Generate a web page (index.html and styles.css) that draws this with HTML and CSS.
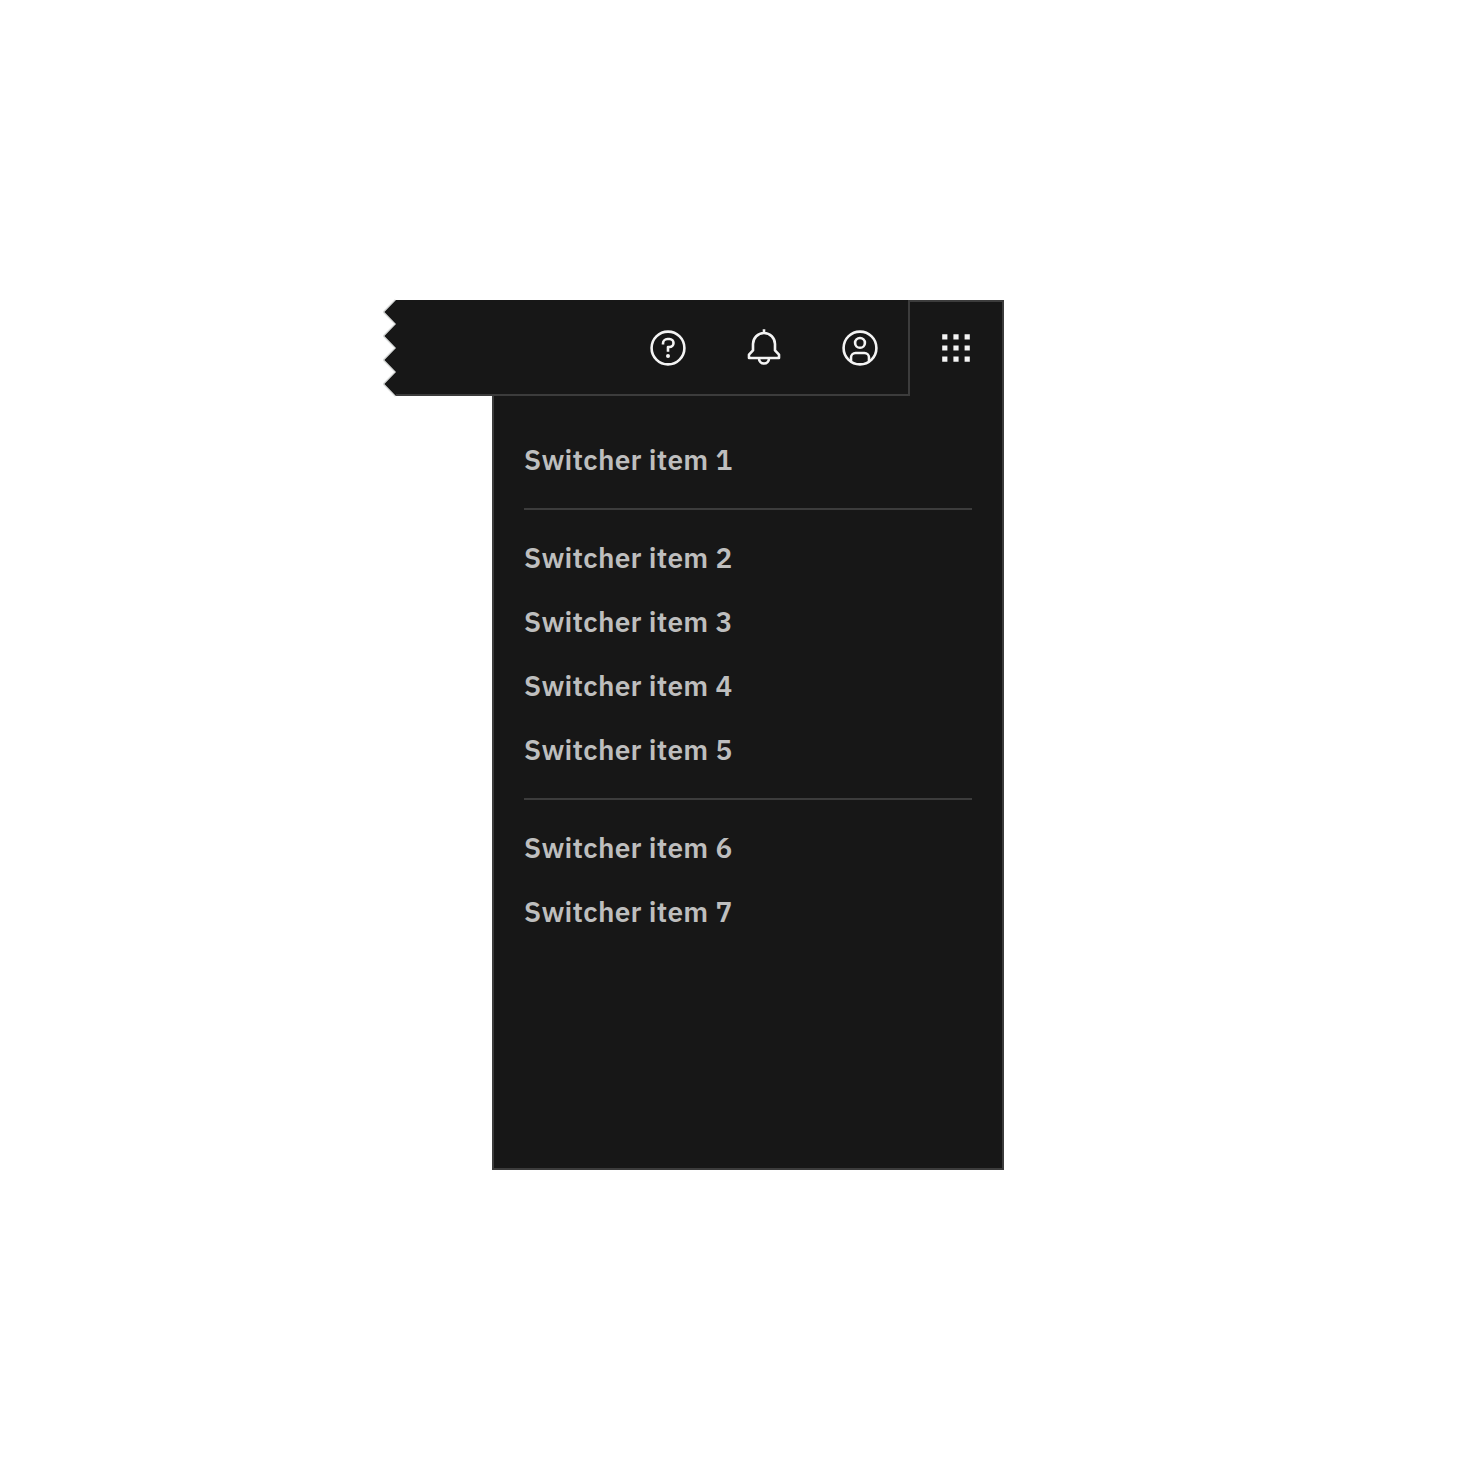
FILE: index.html
```html
<!DOCTYPE html>
<html lang="en">
<head>
<meta charset="utf-8">
<title>Switcher</title>
<link rel="stylesheet" href="styles.css">
</head>
<body>
<div class="shell">
  <header class="header">
    <svg class="torn-edge" width="12" height="96" viewBox="0 0 12 96" aria-hidden="true">
      <path class="torn-line" d="M11.6 0-.2 12 11.6 24-.2 36 11.6 48-.2 60 11.6 72-.2 84 11.6 96"/>
      <path class="torn-fill" d="M12 0 .4 12 12 24 .4 36 12 48 .4 60 12 72 .4 84 12 96Z"/>
    </svg>
    <div class="actions">
      <button class="action" aria-label="Help">
        <svg class="icon" viewBox="0 0 40 40"><circle cx="20" cy="20" r="16.4"/><path d="M15 16.4v-.9a4.5 4.5 0 0 1 4.5-4.5h2a4 4 0 0 1 0 8H20v4.7"/><circle class="solid" cx="20" cy="27.9" r="2"/></svg>
      </button>
      <button class="action" aria-label="Notifications">
        <svg class="icon" viewBox="0 0 40 40"><path d="M20 1.2V5M5 30v-3.4l4-4.2V16a11 11 0 0 1 22 0v6.4l4 4.2V30ZM15 30.5a5 5 0 0 0 10 0"/></svg>
      </button>
      <button class="action" aria-label="Account">
        <svg class="icon" viewBox="0 0 40 40"><circle cx="20" cy="20" r="16.4"/><circle cx="20" cy="14.9" r="4.9"/><path d="M11 33.4V29.6a4.6 4.6 0 0 1 4.6-4.6h8.8a4.6 4.6 0 0 1 4.6 4.6v3.8"/></svg>
      </button>
    </div>
    <button class="action switcher-toggle" aria-label="Switcher">
      <svg class="icon dots" viewBox="0 0 40 40"><path d="M6.2 6.2h5.2v5.2H6.2zM17.4 6.2h5.2v5.2h-5.2zM28.6 6.2h5.2v5.2h-5.2zM6.2 17.4h5.2v5.2H6.2zM17.4 17.4h5.2v5.2h-5.2zM28.6 17.4h5.2v5.2h-5.2zM6.2 28.6h5.2v5.2H6.2zM17.4 28.6h5.2v5.2h-5.2zM28.6 28.6h5.2v5.2h-5.2z"/></svg>
    </button>
  </header>
  <nav class="panel">
    <ul class="items">
      <li class="item">Switcher item 1</li>
      <li class="divider" role="separator"></li>
      <li class="item">Switcher item 2</li>
      <li class="item">Switcher item 3</li>
      <li class="item">Switcher item 4</li>
      <li class="item">Switcher item 5</li>
      <li class="divider" role="separator"></li>
      <li class="item">Switcher item 6</li>
      <li class="item">Switcher item 7</li>
    </ul>
  </nav>
</div>
</body>
</html>
```

FILE: styles.css
```css
* { box-sizing: border-box; }

body {
  margin: 0;
  padding: 300px 0 0 384px;
  background: #fff;
  font-family: "IBM Plex Sans", "Noto Sans", sans-serif;
}

.shell {
  width: 620px;
  display: flex;
  flex-direction: column;
  align-items: flex-end;
}

.header {
  width: 100%;
  height: 96px;
  display: flex;
}

.torn-edge { flex: none; overflow: visible; }
.torn-fill { fill: #171717; }
.torn-line { fill: none; stroke: #d8dad9; stroke-width: 2; stroke-linejoin: bevel; }

.actions {
  flex: 1;
  display: flex;
  justify-content: flex-end;
  background: #171717;
  border-bottom: 2px solid #3c3c3c;
}

.action {
  width: 96px;
  height: 96px;
  padding: 0;
  border: 0;
  background: none;
  display: flex;
  align-items: center;
  justify-content: center;
}

.switcher-toggle {
  background: linear-gradient(#3c3c3c, #3c3c3c) 0 0 / 2px 100% no-repeat,
    linear-gradient(#3c3c3c, #3c3c3c) 100% 0 / 2px 100% no-repeat,
    linear-gradient(#3c3c3c, #3c3c3c) 0 0 / 100% 2px no-repeat,
    #171717;
}

.icon {
  width: 40px;
  height: 40px;
  fill: none;
  stroke: #f4f4f4;
  stroke-width: 2.6;
  stroke-linejoin: round;
}

.icon .solid, .dots { fill: #f4f4f4; stroke: none; }

.panel {
  width: 512px;
  height: 774px;
  padding: 32px 30px;
  background: #171717;
  border: 2px solid #3c3c3c;
  border-top: 0;
}

.items { list-style: none; margin: 0; padding: 0; }

.item {
  height: 64px;
  line-height: 64px;
  font-size: 28px;
  font-weight: 600;
  letter-spacing: 0.29px;
  color: #bebebe;
  white-space: nowrap;
}

.divider {
  height: 2px;
  margin: 16px 0;
  background: #3c3c3c;
}
```
